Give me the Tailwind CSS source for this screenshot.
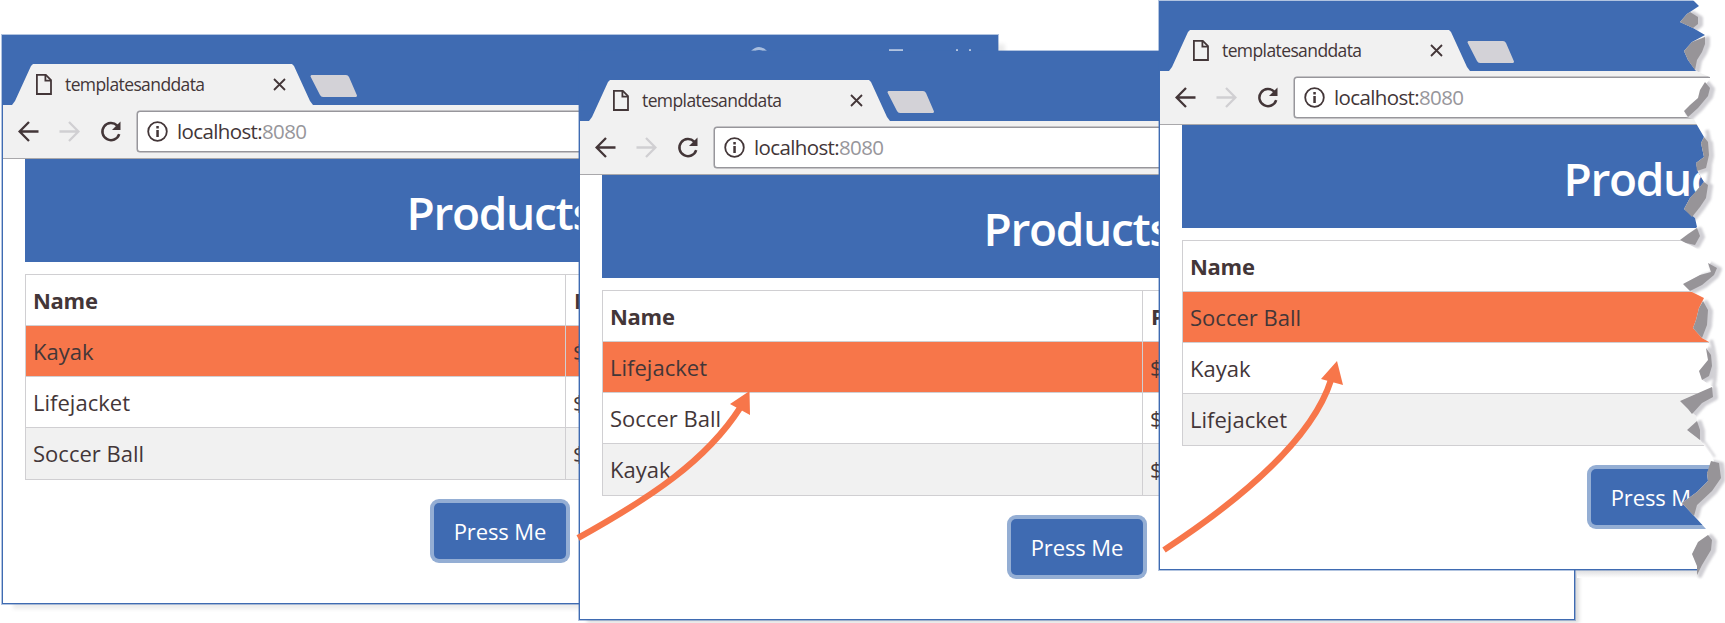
<!DOCTYPE html>
<html lang="en">
<head>
<meta charset="utf-8">
<title>templatesanddata</title>
<script src="https://cdn.jsdelivr.net/npm/@tailwindcss/browser@4"></script>
</head>
<body class="bg-white">
<main id="stage" class="relative w-[1725px] h-[623px] overflow-hidden bg-white font-['Open_Sans','Noto_Sans',sans-serif] text-[#433638]"></main>

<script>
const windows = [
  { place: 'left-[2px] top-[35px] shadow-[9px_7px_4px_-2px_rgba(0,0,0,0.08)]', rows: ['Kayak', 'Lifejacket', 'Soccer Ball'] },
  { place: 'left-[579px] top-[51px] shadow-[6px_5px_4px_-2px_rgba(0,0,0,0.14)]', rows: ['Lifejacket', 'Soccer Ball', 'Kayak'] },
  { place: 'left-[-1px] top-[1px]', rows: ['Soccer Ball', 'Kayak', 'Lifejacket'] },
];
const rowStyle = ['bg-[#f7764a]', 'bg-white', 'bg-[#f1f1f1]'];
const prices = { 'Kayak': '$275.00', 'Lifejacket': '$48.95', 'Soccer Ball': '$19.50' };

const browser = (w, i) => `
<section class="absolute ${w.place} w-[996px] h-[569px] border-[1.500px] border-[#3f6bb2] outline outline-[#3f6bb2]/40 bg-white overflow-hidden flex flex-col">
  <div class="h-[69px] shrink-0 bg-[#3f6bb2] flex items-end pl-[9px] relative">
    <div class="w-[301px] h-[41px] bg-[#f1f1f1] [clip-path:polygon(0_100%,3px_37px,19px_2px,21px_0,280px_0,282px_2px,298px_37px,301px_100%)] flex items-center pl-[24px]">
      <svg class="w-[16px] h-[21px] shrink-0" viewBox="0 0 16 21" fill="none" stroke="#433638" stroke-width="1.8"><path d="M.9 .9H9.8L15 6.2V20H.9Z"/><path d="M9.4 1V6.6H15"/></svg>
      <span class="ml-[13px] w-[208px] text-[17.5px] tracking-[-0.6px] leading-none whitespace-nowrap">templatesanddata</span>
      <svg class="w-[13px] h-[13px] shrink-0" viewBox="0 0 13 13" stroke="#433638" stroke-width="1.8"><path d="M1 1L12 12M12 1L1 12"/></svg>
    </div>
    <svg class="w-[47px] h-[22px] -ml-[3px] mb-[8px]" viewBox="0 0 47 22"><path d="M1.500 0H36Q38 0 39 2L47 20.500Q47 22 45.500 22H13Q11 22 10 20L.5 1.500Q.5 0 1.500 0Z" fill="#d3d2d7"/></svg>
    ${i === 0 ? `<svg class="absolute left-[747px] top-[10px] w-[224px] h-[6px]" viewBox="0 0 224 6"><path d="M2 6Q9 -1 16 6" fill="none" stroke="#a9bede" stroke-width="3"/><path d="M139 4.500H153M206 4.500H208M219 4.500H221" stroke="#fff" stroke-width="2"/></svg>` : ''}
  </div>
  <div class="h-[54px] shrink-0 bg-[#f1f1f1] border-b border-[#a9a8ab] flex items-center pl-[15px] pr-[20px]">
    <svg class="w-[21px] h-[21px] shrink-0" viewBox="0 0 21 21" fill="none" stroke="#433638" stroke-width="2.3"><path d="M20.500 10.500H2M11 1L1.600 10.500L11 20"/></svg>
    <svg class="w-[21px] h-[21px] ml-[20px] shrink-0" viewBox="0 0 21 21" fill="none" stroke="#d0cfd2" stroke-width="2.3"><path d="M.5 10.500H19M10 1L19.400 10.500L10 20"/></svg>
    <svg class="w-[22px] h-[22px] ml-[20px] shrink-0" viewBox="0 0 22 22"><path d="M17.200 4.600A8.600 8.600 0 1 0 19.200 13.200" fill="none" stroke="#433638" stroke-width="2.500"/><path d="M20.500 .5V9H12Z" fill="#433638"/></svg>
    <div class="ml-[15px] flex-1 h-[41px] bg-white border-[#97969b] border rounded-[3px] shadow-[0_0_0_0.5px_#97969b] flex items-center pl-[9px]">
      <svg class="w-[21px] h-[21px] shrink-0" viewBox="0 0 21 21"><circle cx="10.500" cy="10.500" r="9.300" fill="none" stroke="#433638" stroke-width="1.800"/><path d="M9.300 5H11.800V7.400H9.300ZM9.300 9H11.800V16H9.300Z" fill="#433638"/></svg>
      <span class="ml-[9px] text-[20.500px] tracking-[-0.63px] leading-none whitespace-nowrap">localhost:<span class="text-[#97969b]">8080</span></span>
    </div>
  </div>
  <div class="mx-[22px] flex flex-col">
    <h1 class="h-[103px] bg-[#3f6bb2] text-white text-[46px] font-semibold tracking-[-1.300px] leading-none flex items-center justify-center pt-[3px]">Products</h1>
    <div class="mt-[12px] border border-[#d0cfd2] text-[22px]">
      <div class="h-[51px] flex font-bold border-b border-[#d0cfd2] tracking-[-0.3px]">
        <div class="w-[540px] border-r border-[#d0cfd2] flex items-center pl-[7px]">Name</div><div class="flex items-center pl-[8px]">Price</div>
      </div>
      ${w.rows.map((r, k) => `
      <div class="${rowStyle[k]} h-[51px] flex border-b border-[#d0cfd2] last:border-b-0 tracking-[0.02px]">
        <div class="w-[540px] border-r border-[#d0cfd2] flex items-center pl-[7px]">${r}</div><div class="flex items-center pl-[7px]">${prices[r]}</div>
      </div>`).join('')}
    </div>
    <button class="self-center mt-[23px] w-[132px] h-[56px] rounded-[5px] bg-[#3f6bb2] ring-4 ring-[#94aed4] text-white text-[22px] tracking-[-0.1px]">Press Me</button>
  </div>
</section>`;

const gaps = `
    <path d="M1687 14L1680 22L1693 28L1698 24V17L1690 12Z"/>
    <path d="M1705 37L1692 42L1684 51L1688 60L1695 70L1697 60L1702 52L1705 44Z"/>
    <path d="M1705 82L1700 90L1698 98L1690 105L1684 111L1688 117L1698 108L1708 96L1710 88Z"/>
    <path d="M1704 137L1701 143L1704 157L1696 163L1697 171L1706 168L1709 155L1708 142Z"/>
    <path d="M1704 182L1690 198L1684 209L1692 217L1700 207L1706 198L1708 185Z"/>
    <path d="M1697 228L1688 234L1680 240L1686 243L1695 245L1700 236Z"/>
    <path d="M1708 263L1711 272L1700 275L1683 284L1690 291L1702 285L1714 275L1717 268Z"/>
    <path d="M1703 301L1699 308L1696 320L1693 328L1702 338L1707 325L1708 310Z"/>
    <path d="M1706 348L1708 360L1699 371L1702 380L1709 376L1712 366L1711 355Z"/>
    <path d="M1712 387L1680 401L1688 409L1692 414L1702 403L1713 397Z"/>
    <path d="M1697 421L1687 430L1700 440V430Z"/>
    <path d="M1711 461L1707 473L1708 481L1697 492L1682 503L1694 516L1697 505L1712 491L1721 478L1719 463Z"/>
    <path d="M1708 535L1698 542L1692 554L1697 566V575L1702 565L1711 550L1712 540Z"/>`;

const tornShadow = `
<svg class="absolute left-0 top-0 w-[1725px] h-[623px] blur-[1px]" viewBox="0 0 1725 623">
  <g fill="#d0cfd4" stroke="#d0cfd4" stroke-width="4" stroke-linejoin="round" transform="translate(3 1)">${gaps}</g>
  <path d="M1707 130Q1713 155 1708 185M1711 340Q1719 365 1713 390" fill="none" stroke="#d3d2d6" stroke-width="4"/>
  <path d="M1704 441L1715 457" stroke="#d3d2d6" stroke-width="2"/>
</svg>`;

const tornFolds = `
<svg class="absolute left-0 top-0 w-[1725px] h-[623px]" viewBox="0 0 1725 623"><g fill="#979498">${gaps}</g></svg>`;

const tornWindow = `
<div class="absolute left-[1160px] top-0 w-[565px] h-[623px] [clip-path:polygon(-2px_0,533px_0,539px_6px,527px_14px,520px_22px,533px_28px,545px_35px,532px_42px,524px_51px,528px_60px,536px_71px,550px_77px,550px_79px,540px_90px,538px_98px,530px_105px,524px_111px,526px_117px,534px_119px,537px_125px,544px_137px,541px_143px,544px_157px,536px_163px,538px_172px,544px_182px,536px_192px,530px_198px,524px_209px,535px_218px,537px_227px,528px_235px,520px_240px,532px_246px,547px_255px,551px_262px,540px_275px,523px_284px,532px_292px,544px_298px,539px_308px,536px_320px,533px_328px,542px_338px,549px_342px,546px_352px,548px_360px,539px_371px,542px_380px,553px_387px,520px_401px,528px_409px,536px_416px,537px_421px,527px_430px,540px_440px,551px_455px,554px_461px,547px_473px,548px_481px,537px_492px,522px_503px,536px_518px,546px_529px,550px_534px,538px_542px,532px_554px,537px_566px,537px_571px,-2px_571px)]">${browser(windows[2], 2)}</div>`;

const arrows = `
<svg class="absolute left-0 top-0 w-[1725px] h-[623px]" viewBox="0 0 1725 623">
  <g fill="none" stroke="#f7764a" stroke-width="6.200">
    <path d="M578 538C650 498 706 461 740 408"/>
    <path d="M1164 550C1240 500 1312 440 1331 380"/>
  </g>
  <path d="M749.500 391L730 404L750 415ZM1337 361L1321 379L1343 385Z" fill="#f7764a"/>
</svg>`;

const thirdShadow = `<div class="absolute left-[1577px] top-[570px] w-[122px] h-[8px] bg-linear-to-b from-[#dcdcde] to-white"></div>`;

document.getElementById('stage').innerHTML =
  browser(windows[0], 0) + browser(windows[1], 1) + thirdShadow + tornShadow + tornWindow + tornFolds + arrows;
</script>
</body>
</html>
